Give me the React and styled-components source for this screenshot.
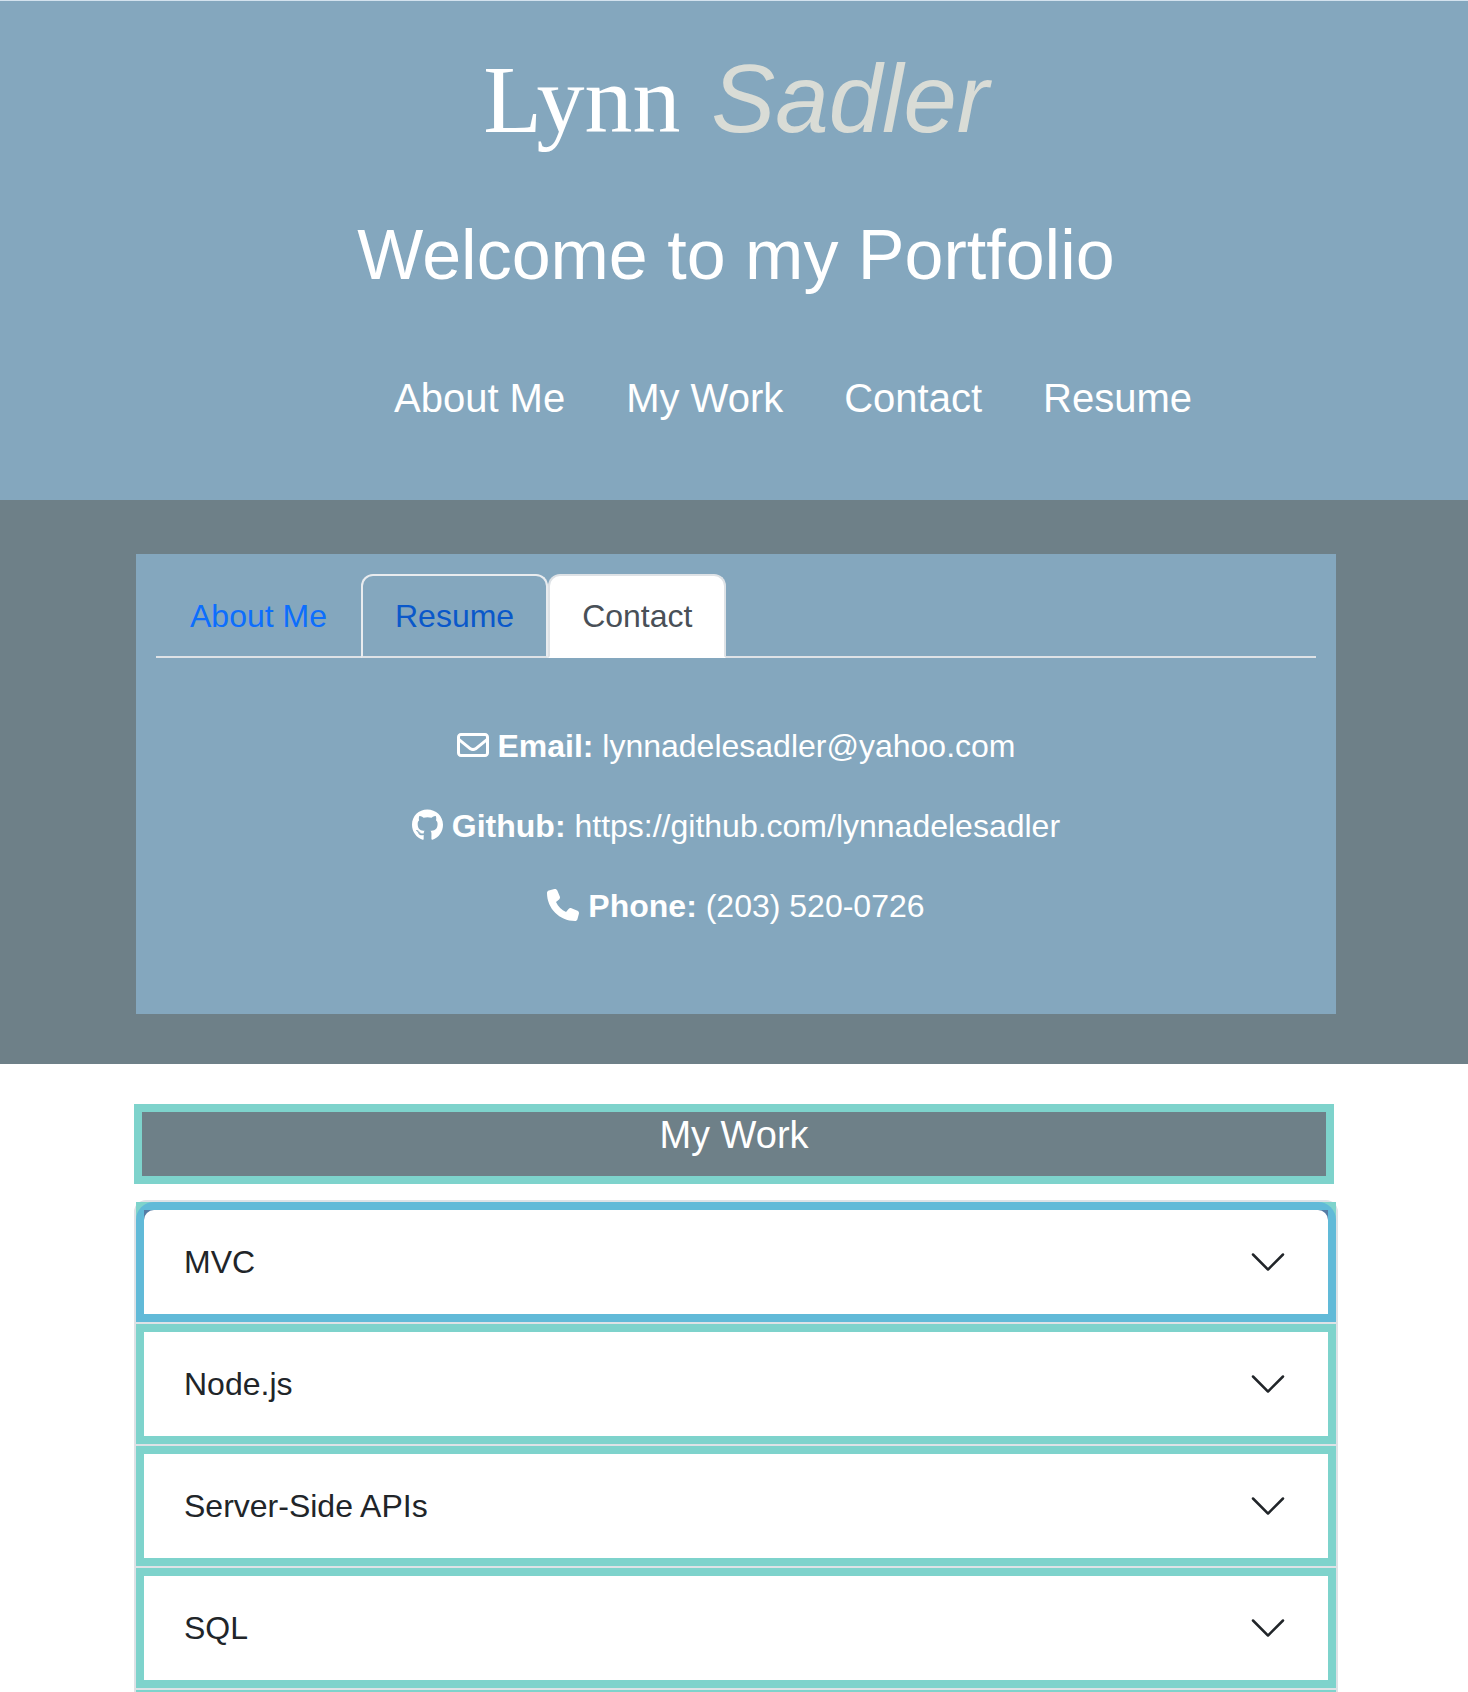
import React, { useState } from "react";
import styled, { createGlobalStyle, css } from "styled-components";
import { FaRegEnvelope, FaGithub, FaPhone } from "react-icons/fa6";

const colors = {
  sky: "#84a7be",
  slate: "#6e8088",
  teal: "#7ed3cc",
  rule: "#dee2e6",
  ink: "#212529",
};

const GlobalStyle = createGlobalStyle`
  *, *::before, *::after { box-sizing: border-box; }
  body {
    margin: 0;
    background: #ffffff;
    color: ${colors.ink};
    font-family: "Liberation Sans", Arial, sans-serif;
    font-size: 32px;
    line-height: 48px;
  }
  h1, h2, h3, p, ul { margin: 0; padding: 0; font-weight: 400; }
  h3 { font-size: 32px; }
  button { font: inherit; }
`;

const Header = styled.header`
  display: flex;
  flex-direction: column;
  align-items: center;
  padding: 40px 0 72px 4px;
  border-top: 1px solid #d3e2ee;
  background: ${colors.sky};
  color: #ffffff;
`;

const Name = styled.h1`
  font-size: 96px;
  line-height: 116px;
`;

const FirstName = styled.span`
  font-family: "Liberation Serif", "Times New Roman", serif;
`;

const LastName = styled.em`
  margin-left: 4px;
  color: #d9dcd6;
`;

const Welcome = styled.h2`
  margin-top: 55px;
  font-size: 70px;
  line-height: 84px;
`;

const SiteNav = styled.nav`
  display: flex;
  gap: 61px;
  margin-top: 71px;
  padding-left: 114px;
  font-size: 40px;
  line-height: 60px;
`;

const SiteLink = styled.a`
  color: inherit;
  text-decoration: none;
`;

const AboutSection = styled.section`
  padding: 54px 132px 50px 136px;
  background: ${colors.slate};
`;

const Panel = styled.div`
  padding: 20px 20px 84px;
  background: ${colors.sky};
`;

const TabList = styled.div`
  display: flex;
  border-bottom: 2px solid ${colors.rule};
`;

const Tab = styled.button`
  margin: 0 0 -2px;
  padding: 16px 32px;
  border: 2px solid transparent;
  border-radius: 12px 12px 0 0;
  background: transparent;
  color: #0d6efd;
  line-height: 48px;
  cursor: pointer;

  ${({ $hovered }) =>
    $hovered &&
    css`
      border-color: #e9ecef #e9ecef ${colors.rule};
      color: #0a58ca;
    `}

  ${({ $active }) =>
    $active &&
    css`
      border-color: ${colors.rule} ${colors.rule} #ffffff;
      background: #ffffff;
      color: #495057;
    `}
`;

const ContactList = styled.div`
  display: flex;
  flex-direction: column;
  gap: 32px;
  padding-top: 64px;
  color: #ffffff;
  text-align: center;

  svg { height: 32px; vertical-align: -4px; }
`;

const WorkSection = styled.section`
  padding: 40px 130px 0 134px;
`;

const WorkTitle = styled.h2`
  min-height: 80px;
  margin: 0 4px 16px 0;
  border: 8px solid ${colors.teal};
  background: ${colors.slate};
  color: #ffffff;
  font-size: 38px;
  line-height: 46px;
  text-align: center;
`;

const AccordionItem = styled.div`
  border: 2px solid ${colors.rule};
  border-top-width: ${({ $first }) => ($first ? "2px" : "0")};
  border-radius: ${({ $first }) => ($first ? "12px 12px 0 0" : "0")};
`;

const AccordionHeader = styled.h3`
  border: 8px solid ${colors.teal};
  background: ${colors.slate};
`;

const AccordionButton = styled.button`
  display: flex;
  align-items: center;
  justify-content: space-between;
  width: 100%;
  padding: 32px 40px;
  border: 0;
  border-radius: ${({ $first }) => ($first ? "10px 10px 0 0" : "0")};
  background: #ffffff;
  box-shadow: ${({ $focused }) =>
    $focused ? "0 0 0 8px rgba(13, 110, 253, 0.25)" : "none"};
  color: ${colors.ink};
  line-height: 40px;
  text-align: left;
  cursor: pointer;
  outline: none;
`;

/* Top edge of the rest of the list. */
const AccordionEdge = styled.div`
  height: 2px;
  border: solid ${colors.rule};
  border-width: 0 2px;
  background: ${colors.teal};
`;

const Chevron = () => (
  <svg width="40" height="40" viewBox="0 0 16 16" fill={colors.ink} aria-hidden="true">
    <path
      fillRule="evenodd"
      d="M1.646 4.646a.5.5 0 0 1 .708 0L8 10.293l5.646-5.647a.5.5 0 0 1 .708.708l-6 6a.5.5 0 0 1-.708 0l-6-6a.5.5 0 0 1 0-.708z"
    />
  </svg>
);

const pages = ["About Me", "My Work", "Contact", "Resume"];
const tabs = ["About Me", "Resume", "Contact"];
const projects = ["MVC", "Node.js", "Server-Side APIs", "SQL"];

export default function App() {
  const [tab, setTab] = useState("Contact");
  const [focused, setFocused] = useState("MVC");

  return (
    <>
      <GlobalStyle />
      <Header>
        <Name>
          <FirstName>Lynn</FirstName> <LastName>Sadler</LastName>
        </Name>
        <Welcome>Welcome to my Portfolio</Welcome>
        <SiteNav>
          {pages.map((page) => (
            <SiteLink key={page} href={`#${page.toLowerCase().replace(" ", "-")}`}>
              {page}
            </SiteLink>
          ))}
        </SiteNav>
      </Header>

      <main>
        <AboutSection id="about-me">
          <Panel>
            <TabList role="tablist">
              {tabs.map((name) => (
                <Tab
                  key={name}
                  type="button"
                  role="tab"
                  aria-selected={name === tab}
                  $active={name === tab}
                  $hovered={name === "Resume"}
                  onClick={() => setTab(name)}
                >
                  {name}
                </Tab>
              ))}
            </TabList>
            <ContactList id="contact">
              <p>
                <FaRegEnvelope size={32} /> <strong>Email:</strong> lynnadelesadler@yahoo.com
              </p>
              <p>
                <FaGithub size={31} /> <strong>Github:</strong> https://github.com/lynnadelesadler
              </p>
              <p>
                <FaPhone size={32} /> <strong>Phone:</strong> (203) 520-0726
              </p>
            </ContactList>
          </Panel>
        </AboutSection>

        <WorkSection id="my-work">
          <WorkTitle>My Work</WorkTitle>
          {projects.map((name, index) => (
            <AccordionItem key={name} $first={index === 0}>
              <AccordionHeader>
                <AccordionButton
                  type="button"
                  aria-expanded="false"
                  $first={index === 0}
                  $focused={name === focused}
                  onClick={() => setFocused(name)}
                >
                  {name}
                  <Chevron />
                </AccordionButton>
              </AccordionHeader>
            </AccordionItem>
          ))}
          <AccordionEdge />
        </WorkSection>
      </main>
    </>
  );
}
